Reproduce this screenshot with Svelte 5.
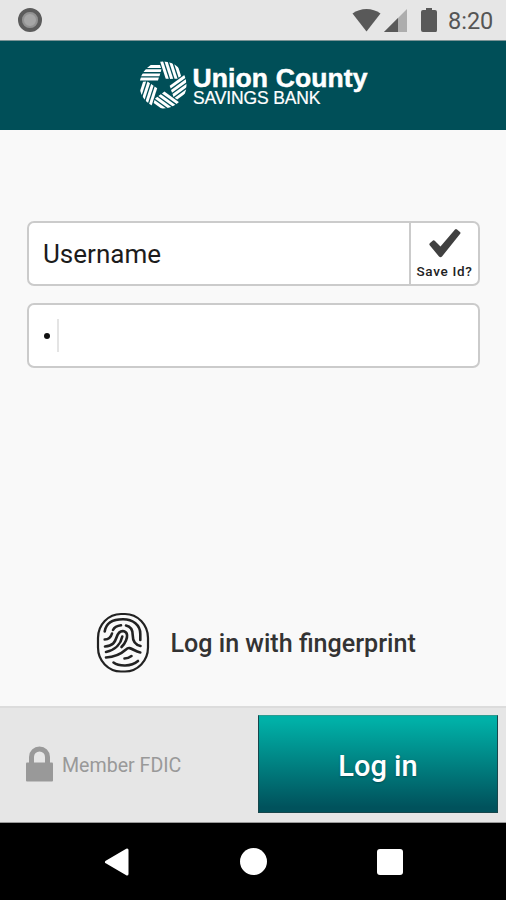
<script>
    let username = "Username";

    // the logo is one striped blade repeated around a five-pointed star
    const blades = [0, 72, 144, 216, 288];
    const stripes = [
        "M-24 -20H-3L-2 -17.1H-24Z",
        "M-24 -15.8H-1.5L-2.3 -12.9H-24Z",
        "M-24 -11.6H-2.7L-3.6 -8.7H-24Z",
        "M-24 -7.4H-4.1L-5 -4.5H-24Z",
    ];
</script>

<div class="screen">
    <div class="status-bar">
        <span class="dot"></span>
        <svg class="status-icons" width="88" height="26" viewBox="0 0 88 26">
            <path d="M0.5 6.5C8.5.4 20.5.4 28.5 6.5L14.5 24.5Z" fill="#595959" />
            <path d="M55 2V25H32Z" fill="#adadad" />
            <path d="M46 11V25H32Z" fill="#595959" />
            <path d="M74 1h6v2h3q2 0 2 2v18q0 2-1 2h-13q-2 0-2-2V5q0-2 2-2h3Z" fill="#595959" />
        </svg>
        <span class="time">8:20</span>
    </div>

    <header>
        <svg width="232" height="50" viewBox="0 0 232 50" role="img" aria-label="Union County Savings Bank">
            <defs>
                <clipPath id="disc"><circle r="23.5" /></clipPath>
            </defs>
            <g transform="translate(26 25)" clip-path="url(#disc)">
                {#each blades as angle}
                    <g transform="rotate({angle})">
                        {#each stripes as stripe}
                            <path d={stripe} fill="#fff" />
                        {/each}
                    </g>
                {/each}
            </g>
            <text class="bank" x="55.5" y="27.3" textLength="175">Union County</text>
            <text class="savings" x="56" y="44.4" textLength="127.5">SAVINGS BANK</text>
        </svg>
    </header>

    <main>
        <div class="field">
            <span class="value">{username}</span>
            <button class="save">
                <svg width="34" height="31" viewBox="0 0 34 31">
                    <path
                        d="M1.5 17Q1 16 2 15L5 12.5Q6 12 7 13L12.5 18.5L27 1.5Q28 .7 29 1.5L32 4Q33 5 32 6L14 28.5Q12.500 30 11 28.500Z"
                        fill="#404040"
                    />
                </svg>
                <span>Save Id?</span>
            </button>
        </div>
        <div class="field password">
            <span class="bullet"></span>
            <span class="caret"></span>
        </div>

        <button class="fingerprint">
            <svg width="54" height="61" viewBox="0 0 54 61" fill="none" stroke="#222" stroke-width="2.6" stroke-linecap="round">
                <rect x="2" y="2" width="50" height="57.5" rx="23" ry="24" stroke-width="2.2" />
                <path d="M8.7 19.5C10 11 17 7.3 27 7.3S44.3 13 44.3 22V28" />
                <path d="M8.7 27.5C13 27.5 15 25 16 21.5" />
                <path d="M17 18C18.5 15 21 13.8 25 13.3" />
                <path d="M30 13.5C35 14.5 36.7 18 36.7 23C36.7 30 40 33 44.5 34" />
                <path d="M9 34.5C17 34 19 30 20.5 25.5C22 21 25 18.7 28 19.3C32 20.5 31.5 25 30 28.5C29 31 27.5 33 25.5 35" />
                <path d="M26.3 24.5C25 31 20 38 10 40" />
                <path d="M10 45.5C20 45 25 42 30 37.5C34 33.5 37 39 44.3 40.5" />
                <path d="M28.5 46.5C31 46.5 33.5 45.5 35.5 44" />
                <path d="M17.5 50.5C23 54.5 35 55 42 49" />
            </svg>
            <span>Log in with fingerprint</span>
        </button>
    </main>

    <footer>
        <div class="member">
            <svg width="27" height="36" viewBox="0 0 27 36">
                <path d="M5.5 18V11a8 8 0 0 1 16 0V18" fill="none" stroke="#999" stroke-width="5" />
                <rect y="16.5" width="27" height="19" rx="1" fill="#999" />
            </svg>
            <span>Member FDIC</span>
        </div>
        <button class="login">Log in</button>
    </footer>

    <nav>
        <svg width="26" height="28" viewBox="0 0 26 28">
            <path d="M2.5 14L23 2V26Z" fill="#fff" stroke="#fff" stroke-width="3" stroke-linejoin="round" />
        </svg>
        <span class="home"></span>
        <span class="recent"></span>
    </nav>
</div>

<style>
    :global(body) {
        margin: 0;
    }

    .screen {
        width: 506px;
        height: 900px;
        display: flex;
        flex-direction: column;
        overflow: hidden;
        background-color: #f9f9f9;
        font-family: Roboto, sans-serif;
    }

    button {
        font-family: inherit;
        padding: 0;
        border: none;
        background: none;
    }

    .status-bar {
        box-sizing: border-box;
        height: 41px;
        flex: none;
        display: flex;
        align-items: center;
        padding: 0 12px 1px 18px;
        background-color: #e6e6e6;
        border-bottom: 1px solid #7b9395;
    }

    .dot {
        box-sizing: border-box;
        width: 24px;
        height: 24px;
        border: 4px solid #5c5c5c;
        border-radius: 50%;
        background-color: #a6a6a6;
        box-shadow: inset 0 0 0 2px #929292;
    }

    .status-icons {
        margin-left: auto;
    }

    .time {
        width: 46px;
        margin-left: 8px;
        padding-top: 2px;
        font-size: 23.5px;
        line-height: 26px;
        color: #555;
    }

    header {
        box-sizing: border-box;
        height: 89px;
        flex: none;
        display: flex;
        justify-content: center;
        padding-top: 19px;
        background-color: #004f58;
    }

    header text {
        font-family: "Liberation Sans", Arial, sans-serif;
        fill: #fff;
    }

    .bank {
        font-size: 26.5px;
        font-weight: bold;
        stroke: #fff;
        stroke-width: 0.5px;
    }

    .savings {
        font-size: 17.5px;
        stroke: #fff;
        stroke-width: 0.2px;
    }

    main {
        flex: 1;
        display: flex;
        flex-direction: column;
        padding: 91px 26px 0 27px;
    }

    .field {
        box-sizing: border-box;
        height: 65px;
        display: flex;
        align-items: center;
        border: 2px solid #cbcbcb;
        border-radius: 7px;
        background-color: #fff;
    }

    .value {
        flex: 1;
        padding-left: 14px;
        font-size: 26px;
        color: #1c1c1c;
    }

    .save {
        width: 69px;
        height: 100%;
        display: flex;
        flex-direction: column;
        align-items: center;
        border-left: 2px solid #cbcbcb;
        padding-top: 5px;
        font-size: 13.5px;
        line-height: 16px;
        letter-spacing: 0.7px;
        font-weight: 500;
        color: #222;
    }

    .save span {
        margin-top: 4px;
    }

    .password {
        margin-top: 17px;
        padding-left: 15px;
    }

    .bullet {
        width: 6px;
        height: 6px;
        border-radius: 50%;
        background-color: #111;
    }

    .caret {
        width: 2px;
        height: 33px;
        margin-left: 7px;
        background-color: #e4e4e4;
    }

    .fingerprint {
        display: flex;
        align-items: center;
        margin-top: auto;
        margin-bottom: 33px;
        padding-left: 69px;
        font-size: 25.1px;
        font-weight: 500;
        color: #333;
    }

    .fingerprint span {
        margin-left: 20.5px;
        padding-top: 2px;
    }

    footer {
        box-sizing: border-box;
        height: 117px;
        flex: none;
        display: flex;
        align-items: center;
        justify-content: space-between;
        padding: 0 8px 2px 26px;
        background-color: #e6e6e6;
        border-top: 2px solid #dcdcdc;
        border-bottom: 1px solid #999;
    }

    .member {
        display: flex;
        align-items: center;
        gap: 9px;
        font-size: 19.6px;
        color: #999;
    }

    .member span {
        padding-top: 2px;
    }

    .login {
        box-sizing: border-box;
        width: 240px;
        height: 98px;
        padding-top: 3px;
        border: 1px solid #17464b;
        border-top-color: #2b9c91;
        background: linear-gradient(#00b0a7 5%, #00525c 95%);
        font-size: 29px;
        font-weight: 500;
        color: #fff;
        text-shadow: 0 1px 2px rgba(0, 50, 60, 0.5);
    }

    nav {
        height: 77px;
        flex: none;
        display: flex;
        align-items: center;
        justify-content: space-between;
        padding: 0 103px 0 104px;
        background-color: #000;
    }

    .home {
        width: 27px;
        height: 27px;
        border-radius: 50%;
        background-color: #fff;
    }

    .recent {
        width: 26px;
        height: 26px;
        border-radius: 3px;
        background-color: #fff;
    }
</style>
